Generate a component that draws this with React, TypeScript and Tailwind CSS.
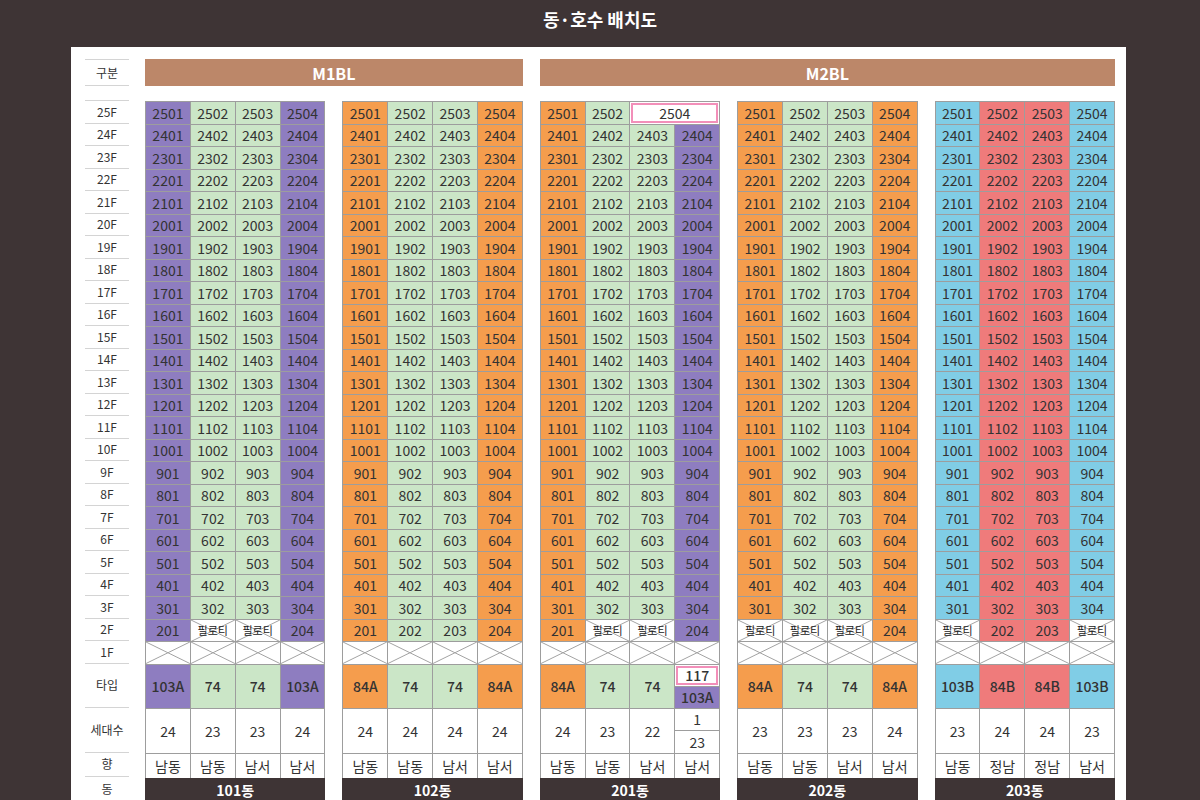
import React from "react";

type Bldg = {
  name: string;
  cols: string[];
  second: (string | null)[];
  types: string[];
  households: string[];
  dirs: string[];
  special?: boolean;
};

const P = "bg-[#8e7dc0]";
const G = "bg-[#cbe6c7]";
const O = "bg-[#f59d4d]";
const B = "bg-[#80cde6]";
const R = "bg-[#ef7b7b]";

const buildings: Bldg[] = [
  {
    name: "101동",
    cols: [P, G, G, P],
    second: ["201", null, null, "204"],
    types: ["103A", "74", "74", "103A"],
    households: ["24", "23", "23", "24"],
    dirs: ["남동", "남동", "남서", "남서"],
  },
  {
    name: "102동",
    cols: [O, G, G, O],
    second: ["201", "202", "203", "204"],
    types: ["84A", "74", "74", "84A"],
    households: ["24", "24", "24", "24"],
    dirs: ["남동", "남동", "남서", "남서"],
  },
  {
    name: "201동",
    cols: [O, G, G, P],
    second: ["201", null, null, "204"],
    types: ["84A", "74", "74", "103A"],
    households: ["24", "23", "22", "23"],
    dirs: ["남동", "남동", "남서", "남서"],
    special: true,
  },
  {
    name: "202동",
    cols: [O, G, G, O],
    second: [null, null, null, "204"],
    types: ["84A", "74", "74", "84A"],
    households: ["23", "23", "23", "24"],
    dirs: ["남동", "남동", "남서", "남서"],
  },
  {
    name: "203동",
    cols: [B, R, R, B],
    second: [null, "202", "203", null],
    types: ["103B", "84B", "84B", "103B"],
    households: ["23", "24", "24", "23"],
    dirs: ["남동", "정남", "정남", "남서"],
  },
];

const floors = Array.from({ length: 23 }, (_, i) => 25 - i);

function Cross() {
  return (
    <svg className="absolute inset-0 w-full h-full" viewBox="0 0 100 100" preserveAspectRatio="none">
      <line x1="0" y1="0" x2="100" y2="100" stroke="#a3a3a3" strokeWidth="1" vectorEffect="non-scaling-stroke" />
      <line x1="100" y1="0" x2="0" y2="100" stroke="#a3a3a3" strokeWidth="1" vectorEffect="non-scaling-stroke" />
    </svg>
  );
}

function Cell({ bg, children }: { bg: string; children?: React.ReactNode }) {
  return (
    <div className={`relative min-h-0 overflow-hidden flex items-center justify-center border-r border-[#9d9d9d] ${bg}`}>
      {children}
    </div>
  );
}

const rowCls = "grid grid-cols-4 grid-rows-1 border-b border-[#9d9d9d]";

function Building({ b }: { b: Bldg }) {
  return (
    <div className="flex flex-col">
      <div className="border-l border-t border-[#9d9d9d] text-[14px] leading-[18px] text-[#333]">
        {floors.map((f) => {
          if (b.special && f === 25) {
            return (
              <div key={f} className={`${rowCls} h-[22.5px]`}>
                <Cell bg={b.cols[0]}>{f}01</Cell>
                <Cell bg={b.cols[1]}>{f}02</Cell>
                <div className="col-span-2 min-h-0 overflow-hidden border-r border-[#9d9d9d] p-[1px] bg-white">
                  <div className="h-full border-2 border-[#f28fb9] flex items-center justify-center">2504</div>
                </div>
              </div>
            );
          }
          return (
            <div key={f} className={`${rowCls} h-[22.5px]`}>
              {b.cols.map((c, i) => (
                <Cell key={i} bg={c}>
                  {f}0{i + 1}
                </Cell>
              ))}
            </div>
          );
        })}
        <div className={`${rowCls} h-[22.5px]`}>
          {b.second.map((s, i) =>
            s ? (
              <Cell key={i} bg={b.cols[i]}>
                {s}
              </Cell>
            ) : (
              <Cell key={i} bg="bg-white">
                <Cross />
                <span className="relative text-[11px] leading-none text-[#222]">필로티</span>
              </Cell>
            )
          )}
        </div>
        <div className={`${rowCls} h-[22.5px]`}>
          {[0, 1, 2, 3].map((i) => (
            <Cell key={i} bg="bg-white">
              <Cross />
            </Cell>
          ))}
        </div>
        <div className={`${rowCls} h-[44px] font-medium`}>
          {b.types.map((t, i) =>
            b.special && i === 3 ? (
              <div key={i} className="flex flex-col min-h-0 border-r border-[#9d9d9d]">
                <div className="h-[22px] bg-white p-[1px] border-b border-[#9d9d9d]">
                  <div className="h-full border-2 border-[#f28fb9] flex items-center justify-center">117</div>
                </div>
                <div className={`flex-1 flex items-center justify-center ${b.cols[3]}`}>{t}</div>
              </div>
            ) : (
              <Cell key={i} bg={b.cols[i]}>
                {t}
              </Cell>
            )
          )}
        </div>
        <div className={`${rowCls} h-[45px] bg-white`}>
          {b.households.map((h, i) =>
            b.special && i === 3 ? (
              <div key={i} className="flex flex-col min-h-0 border-r border-[#9d9d9d]">
                <div className="h-[22px] flex items-center justify-center border-b border-[#9d9d9d]">1</div>
                <div className="flex-1 flex items-center justify-center">{h}</div>
              </div>
            ) : (
              <Cell key={i} bg="bg-white">
                {h}
              </Cell>
            )
          )}
        </div>
        <div className="grid grid-cols-4 grid-rows-1 h-[24px] bg-white">
          {b.dirs.map((d, i) => (
            <Cell key={i} bg="bg-white">
              {d}
            </Cell>
          ))}
        </div>
      </div>
      <div className="h-[26px] bg-[#3e3435] text-white font-bold text-[14px] flex items-center justify-center">
        {b.name}
      </div>
    </div>
  );
}

function Label({ h, children, last }: { h: string; children: React.ReactNode; last?: boolean }) {
  return (
    <div className={`flex items-center justify-center border-t border-[#d4d4d4] ${h} ${last ? "border-b" : ""}`}>
      {children}
    </div>
  );
}

export default function App() {
  return (
    <div
      className="w-[1200px] h-[800px] overflow-hidden bg-[#3e3435] flex flex-col"
      style={{ fontFamily: '"Noto Sans CJK KR", "Noto Sans", sans-serif' }}
    >
      <div className="h-[47px] shrink-0 flex items-center justify-center text-white font-bold text-[18px] pb-[8px]">
        동·호수 배치도
      </div>
      <div className="ml-[71px] mr-[74px] shrink-0 bg-white pl-[14px] pr-[11px] pt-[12px] pb-[20px] flex gap-[16px]">
        <div className="w-[44px] shrink-0 flex flex-col text-[12px] text-[#333]">
          <Label h="h-[27px]" last>
            구분
          </Label>
          <div className="h-[14px]" />
          {floors.map((f) => (
            <Label key={f} h="h-[22.5px]">
              {f}F
            </Label>
          ))}
          <Label h="h-[22.5px]">2F</Label>
          <Label h="h-[22.5px]">1F</Label>
          <Label h="h-[44px]">타입</Label>
          <Label h="h-[45px]">세대수</Label>
          <Label h="h-[24px]">향</Label>
          <Label h="h-[26px]" last>
            동
          </Label>
        </div>
        <div className="flex-1 flex flex-col">
          <div className="grid grid-cols-5 gap-[17px] h-[27px] text-white font-bold text-[16px]">
            <div className="col-span-2 bg-[#bc8769] flex items-center justify-center">M1BL</div>
            <div className="col-span-3 bg-[#bc8769] flex items-center justify-center">M2BL</div>
          </div>
          <div className="h-[15px]" />
          <div className="grid grid-cols-5 gap-[17px]">
            {buildings.map((b) => (
              <Building key={b.name} b={b} />
            ))}
          </div>
        </div>
      </div>
    </div>
  );
}
